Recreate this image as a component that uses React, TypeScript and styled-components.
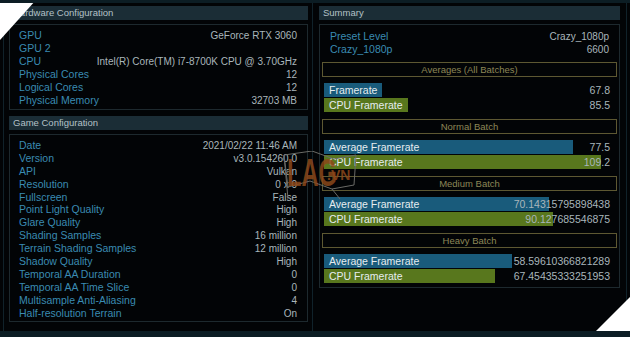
import React from "react";
import styled, {createGlobalStyle} from "styled-components";

interface Row {
  label: string;
  value: string;
}

interface Batch {
  title: string;
  avg: number;
  cpu: number;
}

const hardware: Row[] = [
  {label: "GPU", value: "GeForce RTX 3060"},
  {label: "GPU 2", value: ""},
  {label: "CPU", value: "Intel(R) Core(TM) i7-8700K CPU @ 3.70GHz"},
  {label: "Physical Cores", value: "12"},
  {label: "Logical Cores", value: "12"},
  {label: "Physical Memory", value: "32703 MB"},
];

const game: Row[] = [
  {label: "Date", value: "2021/02/22 11:46 AM"},
  {label: "Version", value: "v3.0.154260.0"},
  {label: "API", value: "Vulkan"},
  {label: "Resolution", value: "0 x 0"},
  {label: "Fullscreen", value: "False"},
  {label: "Point Light Quality", value: "High"},
  {label: "Glare Quality", value: "High"},
  {label: "Shading Samples", value: "16 million"},
  {label: "Terrain Shading Samples", value: "12 million"},
  {label: "Shadow Quality", value: "High"},
  {label: "Temporal AA Duration", value: "0"},
  {label: "Temporal AA Time Slice", value: "0"},
  {label: "Multisample Anti-Aliasing", value: "4"},
  {label: "Half-resolution Terrain", value: "On"},
];

const batches: Batch[] = [
  {title: "Normal Batch", avg: 77.5, cpu: 109.2},
  {title: "Medium Batch", avg: 70.14315795898438, cpu: 90.127685546875},
  {title: "Heavy Batch", avg: 58.59610366821289, cpu: 67.45435333251953},
];

// px per fps, read off the bars
const AVG_SCALE = 3.21;
const CPU_SCALE = 2.54;

const App: React.FC = () => {
  return (
    <>
      <GlobalStyle />
      <StyledWindow>
        <StyledPanel>
          <StyledHeader>Hardware Configuration</StyledHeader>
          <StyledBox>
            {hardware.map(({label, value}) => (
              <StyledRow key={label}>
                <StyledLabel>{label}</StyledLabel>
                <StyledValue>{value}</StyledValue>
              </StyledRow>
            ))}
          </StyledBox>
          <StyledHeader $gap>Game Configuration</StyledHeader>
          <StyledBox $dense>
            {game.map(({label, value}) => (
              <StyledRow key={label} $dense>
                <StyledLabel>{label}</StyledLabel>
                <StyledValue>{value}</StyledValue>
              </StyledRow>
            ))}
          </StyledBox>
        </StyledPanel>

        <StyledPanel $right>
          <StyledHeader>Summary</StyledHeader>
          <StyledSummaryBox>
            <StyledSummaryRow>
              <StyledLabel>Preset Level</StyledLabel>
              <StyledValue>Crazy_1080p</StyledValue>
            </StyledSummaryRow>
            <StyledSummaryRow>
              <StyledLabel>Crazy_1080p</StyledLabel>
              <StyledValue>6600</StyledValue>
            </StyledSummaryRow>

            <StyledSectionTitle $first>Averages (All Batches)</StyledSectionTitle>
            <StyledBars>
              <StyledBarRow>
                <StyledBar $kind="avg">Framerate</StyledBar>
                <StyledBarValue>67.8</StyledBarValue>
              </StyledBarRow>
              <StyledBarRow>
                <StyledBar $kind="cpu">CPU Framerate</StyledBar>
                <StyledBarValue>85.5</StyledBarValue>
              </StyledBarRow>
            </StyledBars>

            {batches.map((b) => (
              <React.Fragment key={b.title}>
                <StyledSectionTitle>{b.title}</StyledSectionTitle>
                <StyledBars>
                  <StyledBarRow>
                    <StyledBar
                      $kind="avg"
                      style={{width: Math.round(b.avg * AVG_SCALE)}}
                    >
                      Average Framerate
                    </StyledBar>
                    <StyledBarValue>{b.avg}</StyledBarValue>
                  </StyledBarRow>
                  <StyledBarRow>
                    <StyledBar
                      $kind="cpu"
                      style={{width: Math.round(b.cpu * CPU_SCALE)}}
                    >
                      CPU Framerate
                    </StyledBar>
                    <StyledBarValue>{b.cpu}</StyledBarValue>
                  </StyledBarRow>
                </StyledBars>
              </React.Fragment>
            ))}
          </StyledSummaryBox>
        </StyledPanel>

        <StyledWatermark>
          <svg width="76" height="50" viewBox="0 0 76 50">
            <path
              d="M2 4 L30 0 L52 8 L74 4 L72 34 L50 38 L28 30 L6 36 Z"
              fill="none"
              stroke="#6a6a66"
              strokeWidth="1"
            />
            <path d="M2 4 L6 48" stroke="#6a6a66" strokeWidth="1" />
            <path d="M50 38 L58 48" stroke="#6a6a66" strokeWidth="1" />
          </svg>
          <StyledWatermarkBig>LAG</StyledWatermarkBig>
          <StyledWatermarkSmall>.VN</StyledWatermarkSmall>
        </StyledWatermark>

        <StyledCorner $pos="tl" />
        <StyledCorner $pos="br" />
      </StyledWindow>
    </>
  );
};

export default App;

const GlobalStyle = createGlobalStyle`
  html, body {
    margin: 0;
    padding: 0;
    background: #020406;
  }
  body {
    font-family: "Liberation Sans", Arial, sans-serif;
  }
`;

const StyledWindow = styled.div`
  position: relative;
  width: 630px;
  height: 337px;
  box-sizing: border-box;
  overflow: hidden;
  display: grid;
  grid-template-columns: 310px 314px;
  align-items: stretch;
  padding-left: 3px;
  background: #020406;
  border-top: 3px solid #0c1d24;
  border-bottom: 6px solid #0c1d24;
`;

const StyledPanel = styled.section<{$right?: boolean}>`
  display: flex;
  flex-direction: column;
  box-sizing: border-box;
  padding: 3px ${({$right}) => ($right ? "6px 0 6px" : "4px 0 5px")};
  border-left: ${({$right}) => ($right ? "0" : "1px solid #10222a")};
  border-right: 1px solid #10222a;
`;

const StyledHeader = styled.div<{$gap?: boolean}>`
  height: 14px;
  line-height: 14px;
  margin-top: ${({$gap}) => ($gap ? "6px" : "0")};
  padding-left: 4px;
  background: #1b2d36;
  color: #b4c1c7;
  font-size: 9.5px;
  white-space: nowrap;
`;

const StyledBox = styled.div<{$dense?: boolean}>`
  margin-top: 4px;
  padding: 4px 10px 2px 9px;
  border: 1px solid #1d292e;
`;

const StyledRow = styled.div<{$dense?: boolean}>`
  display: flex;
  justify-content: space-between;
  align-items: baseline;
  height: ${({$dense}) => ($dense ? "12.9px" : "13px")};
  line-height: ${({$dense}) => ($dense ? "12.9px" : "13px")};
  white-space: nowrap;
`;

const StyledLabel = styled.span`
  color: #3a8bb2;
  font-size: 10.5px;
`;

const StyledValue = styled.span`
  color: #a9b6bb;
  font-size: 10px;
`;

const StyledSummaryBox = styled.div`
  margin-top: 4px;
  padding: 5px 2px 4px 2px;
  border: 1px solid #1d292e;
`;

const StyledSummaryRow = styled(StyledRow)`
  padding: 0 8px;
`;

const StyledSectionTitle = styled.div<{$first?: boolean}>`
  height: 13px;
  line-height: 13px;
  margin-top: ${({$first}) => ($first ? "6px" : "7px")};
  border: 1px solid #5d5832;
  color: #8d8757;
  font-size: 9.5px;
  text-align: center;
`;

const StyledBars = styled.div`
  display: flex;
  flex-direction: column;
  gap: 1px;
  margin: 6px 0 0 2px;
  padding-right: 7px;
`;

const StyledBarRow = styled.div`
  display: grid;
  height: 14px;
  font-size: 10.5px;
  white-space: nowrap;

  & > * {
    grid-area: 1 / 1;
  }
`;

const StyledBar = styled.div<{$kind: "avg" | "cpu"}>`
  justify-self: start;
  box-sizing: border-box;
  height: 14px;
  line-height: 14px;
  padding: 0 5px;
  background: ${({$kind}) => ($kind === "avg" ? "#195b7b" : "#58771d")};
  color: #e6edf0;
`;

const StyledBarValue = styled.div`
  justify-self: end;
  line-height: 14px;
  color: #a9b6bb;
`;

const StyledCorner = styled.div<{$pos: "tl" | "br"}>`
  position: absolute;
  width: 40px;
  height: 40px;
  background: #ffffff;
  ${({$pos}) =>
    $pos === "tl"
      ? "top: -3px; left: 0; clip-path: polygon(0 0, 90% 0, 0 100%);"
      : "bottom: -6px; right: 0; clip-path: polygon(100% 0, 100% 100%, 0 100%);"}
`;

const StyledWatermark = styled.div`
  position: absolute;
  left: 282px;
  top: 148px;
  width: 76px;
  height: 50px;
  pointer-events: none;

  svg {
    position: absolute;
    inset: 0;
  }
`;

const StyledWatermarkBig = styled.span`
  position: absolute;
  left: 5px;
  top: 4px;
  transform: scaleX(0.62);
  transform-origin: left top;
  color: rgba(140, 72, 26, 0.85);
  font-weight: bold;
  font-size: 38px;
  line-height: 36px;
`;

const StyledWatermarkSmall = styled.span`
  position: absolute;
  left: 45px;
  top: 17px;
  color: rgba(140, 72, 26, 0.85);
  font-weight: bold;
  font-size: 14px;
  line-height: 14px;
`;
